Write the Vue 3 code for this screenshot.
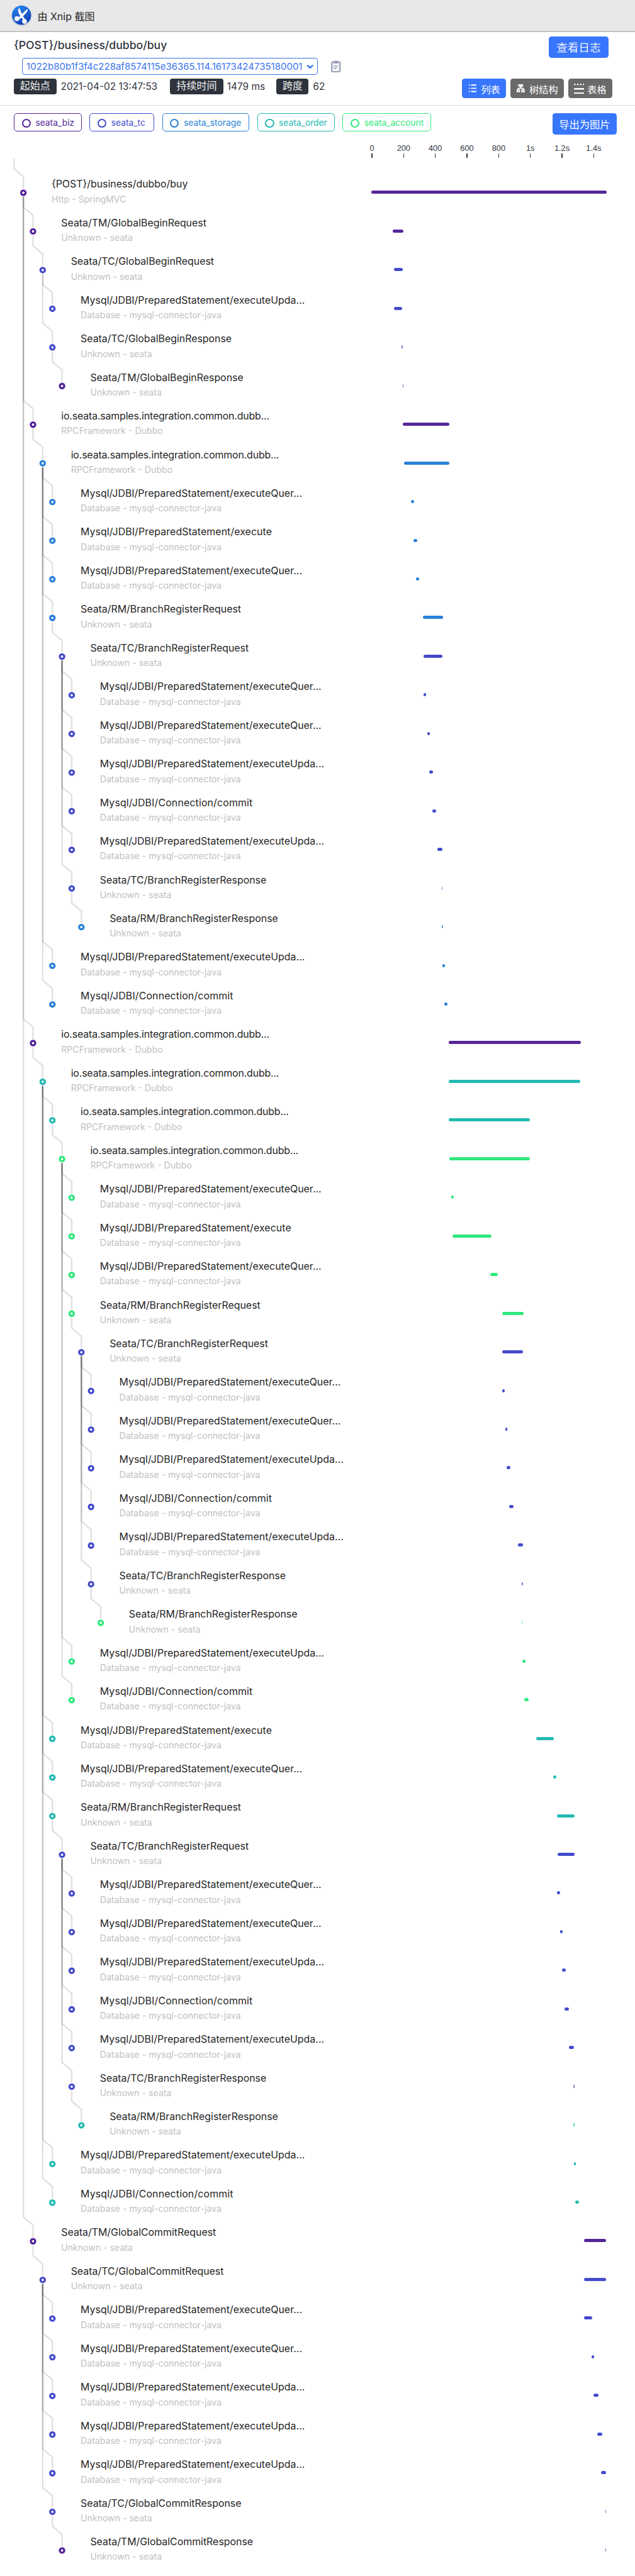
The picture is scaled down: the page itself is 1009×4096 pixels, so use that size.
<script setup>
const K = 1009 / 1576
const px = (n) => `${(n * K).toFixed(2)}px`

const palette = {
  biz: '#54259a',
  tc: '#444acb',
  storage: '#2881d8',
  order: '#22bab2',
  account: '#2fe97c',
}

const services = [
  { key: 'biz', name: 'seata_biz', width: 168 },
  { key: 'tc', name: 'seata_tc', width: 160 },
  { key: 'storage', name: 'seata_storage', width: 216 },
  { key: 'order', name: 'seata_order', width: 192 },
  { key: 'account', name: 'seata_account', width: 220 },
]

const SQL = 'Mysql/JDBI/PreparedStatement/'
const titles = {
  post: '{POST}/business/dubbo/buy',
  quer: SQL + 'executeQuer...',
  upda: SQL + 'executeUpda...',
  exec: SQL + 'execute',
  commit: 'Mysql/JDBI/Connection/commit',
  io: 'io.seata.samples.integration.common.dubb...',
}
const layers = {
  post: 'Http - SpringMVC',
  io: 'RPCFramework - Dubbo',
  quer: 'Database - mysql-connector-java',
  upda: 'Database - mysql-connector-java',
  exec: 'Database - mysql-connector-java',
  commit: 'Database - mysql-connector-java',
}

// depth, service, endpoint, bar start, bar end
const spans = [
  [0, 'biz', 'post', 95, 1409],
  [1, 'biz', 'TM/GlobalBeginRequest', 214, 272],
  [2, 'tc', 'TC/GlobalBeginRequest', 221, 269],
  [3, 'tc', 'upda', 221, 266],
  [3, 'tc', 'TC/GlobalBeginResponse', 264, 269],
  [4, 'biz', 'TM/GlobalBeginResponse', 268, 272],
  [1, 'biz', 'io', 269, 529],
  [2, 'storage', 'io', 278, 529],
  [3, 'storage', 'quer', 314, 332],
  [3, 'storage', 'exec', 328, 349],
  [3, 'storage', 'quer', 345, 361],
  [3, 'storage', 'RM/BranchRegisterRequest', 381, 494],
  [4, 'tc', 'TC/BranchRegisterRequest', 387, 493],
  [5, 'tc', 'quer', 387, 401],
  [5, 'tc', 'quer', 407, 421],
  [5, 'tc', 'upda', 417, 439],
  [5, 'tc', 'commit', 435, 457],
  [5, 'tc', 'upda', 464, 493],
  [5, 'tc', 'TC/BranchRegisterResponse', 489, 493],
  [6, 'storage', 'RM/BranchRegisterResponse', 489, 495],
  [3, 'storage', 'upda', 490, 507],
  [3, 'storage', 'commit', 502, 521],
  [1, 'biz', 'io', 525, 1264],
  [2, 'order', 'io', 527, 1262],
  [3, 'order', 'io', 527, 982],
  [4, 'account', 'io', 529, 981],
  [5, 'account', 'quer', 541, 553],
  [5, 'account', 'exec', 548, 765],
  [5, 'account', 'quer', 760, 800],
  [5, 'account', 'RM/BranchRegisterRequest', 825, 944],
  [6, 'tc', 'TC/BranchRegisterRequest', 827, 943],
  [7, 'tc', 'quer', 826, 840],
  [7, 'tc', 'quer', 842, 855],
  [7, 'tc', 'upda', 849, 870],
  [7, 'tc', 'commit', 864, 888],
  [7, 'tc', 'upda', 912, 942],
  [7, 'tc', 'TC/BranchRegisterResponse', 936, 943],
  [8, 'account', 'RM/BranchRegisterResponse', 938, 943],
  [5, 'account', 'upda', 940, 955],
  [5, 'account', 'commit', 950, 973],
  [3, 'order', 'exec', 1014, 1113],
  [3, 'order', 'quer', 1111, 1129],
  [3, 'order', 'RM/BranchRegisterRequest', 1131, 1230],
  [4, 'tc', 'TC/BranchRegisterRequest', 1134, 1230],
  [5, 'tc', 'quer', 1133, 1148],
  [5, 'tc', 'quer', 1149, 1165],
  [5, 'tc', 'upda', 1159, 1180],
  [5, 'tc', 'commit', 1173, 1199],
  [5, 'tc', 'upda', 1200, 1228],
  [5, 'tc', 'TC/BranchRegisterResponse', 1223, 1230],
  [6, 'order', 'RM/BranchRegisterResponse', 1225, 1231],
  [3, 'order', 'upda', 1226, 1239],
  [3, 'order', 'commit', 1234, 1255],
  [1, 'biz', 'TM/GlobalCommitRequest', 1282, 1408],
  [2, 'tc', 'TC/GlobalCommitRequest', 1284, 1407],
  [3, 'tc', 'quer', 1284, 1330],
  [3, 'tc', 'quer', 1325, 1338],
  [3, 'tc', 'upda', 1336, 1363],
  [3, 'tc', 'upda', 1357, 1385],
  [3, 'tc', 'upda', 1379, 1407],
  [3, 'tc', 'TC/GlobalCommitResponse', 1401, 1408],
  [4, 'biz', 'TM/GlobalCommitResponse', 1403, 1408],
].map(([depth, service, key, from, to], i) => ({
  depth,
  color: palette[service],
  title: titles[key] || `Seata/${key}`,
  layer: layers[key] || 'Unknown - seata',
  kind: titles[key] ? key : 'seata',
  start: from / 2.2529 - 43,
  length: (to - from) / 2.2529,
  tiny: to - from < 8,
  x: 58 + depth * 24,
  y: 48 + i * 96,
}))

const links = spans.slice(1).map((span, i) => {
  let p = i
  while (spans[p].depth !== span.depth - 1) p--
  const parent = spans[p]
  return `M${parent.x} ${parent.y + 10}V${span.y - 60}L${span.x} ${span.y - 40}V${span.y - 10}`
})

const ticks = ['0', '200', '400', '600', '800', '1s', '1.2s', '1.4s']
</script>

<template>
  <div class="page">
    <div class="xnip">
      <svg class="xnip-logo" viewBox="0 0 60 60">
        <defs>
          <linearGradient id="disc" x1="0" y1="0" x2="0.4" y2="1">
            <stop offset="0" stop-color="#2a8df2" />
            <stop offset="1" stop-color="#1240b8" />
          </linearGradient>
        </defs>
        <circle cx="30" cy="31.5" r="26" fill="#bfc3cc" opacity=".6" />
        <circle cx="30" cy="30" r="25.3" fill="#e6edf6" />
        <circle cx="30" cy="30" r="24" fill="url(#disc)" />
        <g fill="#f4f6fa">
          <path d="M24.5 11.5C20.5 15 21.5 20.5 23 24.5L26.5 31.5L20 38L23 41.5L30 36.5L35 43L38.5 40L34 32.5C39 27 46 21 45.5 15.5C44.8 14.5 43 15.5 41.5 16.8L31 27Z" />
          <circle cx="18.5" cy="38.5" r="6" />
          <circle cx="37.5" cy="45.5" r="6" />
        </g>
      </svg>
      <span>由 Xnip 截图</span>
    </div>

    <header class="detail">
      <div class="detail-top">
        <div>
          <h1>{POST}/business/dubbo/buy</h1>
          <div class="trace-line">
            <div class="trace-select">
              <span>1022b80b1f3f4c228af8574115e36365.114.16173424735180001</span>
              <svg viewBox="0 0 18 12"><path d="M2 2.5L9 9L16 2.5" fill="none" stroke="#3b74e6" stroke-width="4" /></svg>
            </div>
            <svg class="clip" viewBox="0 0 24 30">
              <rect x="1.8" y="3.8" width="20.4" height="24.4" rx="3.5" fill="none" stroke="#98a0b2" stroke-width="3.6" />
              <path d="M6 2.5H9.5Q10 0 12 0T14.5 2.5H18V8H6Z" fill="#98a0b2" />
              <path d="M6.5 13H17.5M6.5 17H17.5M6.5 21H14" stroke="#98a0b2" stroke-width="2" />
            </svg>
          </div>
        </div>
        <button class="btn log">查看日志</button>
      </div>
      <div class="detail-bottom">
        <div class="facts">
          <b>起始点</b><span class="date">2021-04-02 13:47:53</span>
          <b class="w4">持续时间</b><span class="dur">1479 ms</span>
          <b class="w2">跨度</b><span class="count">62</span>
        </div>
        <div class="modes">
          <button class="btn mode active">
            <svg class="i-s" viewBox="0 0 20 20" fill="none" stroke="#fff" stroke-width="3">
              <path d="M0 2H2.6M0 10H2.6M0 18H2.6" />
              <path d="M6.5 2H18.5M6.5 10H18.5M6.5 18H18.5" stroke-linecap="round" />
            </svg>列表
          </button>
          <button class="btn mode tree">
            <svg class="i-s" viewBox="0 0 20 20">
              <path d="M4 0H16V6H11.5V8.5H15Q18 8.5 18 12H20V20H11.5V12H14.5V11H5.5V12H8.5V20H0V12H2Q2 8.5 5 8.5H8.5V6H4Z" fill="#fff" />
              <rect x="3.2" y="14.5" width="2.3" height="2.5" fill="#6a6a6a" />
              <rect x="14.5" y="14.5" width="2.3" height="2.5" fill="#6a6a6a" />
            </svg>树结构
          </button>
          <button class="btn mode table">
            <svg class="i-l" viewBox="0 0 26 26" fill="#fff">
              <circle cx="2" cy="2" r="2" /><circle cx="9.3" cy="2" r="2" /><circle cx="16.7" cy="2" r="2" /><circle cx="24" cy="2" r="2" />
              <rect y="11" width="26" height="4" rx="2" /><rect y="22" width="26" height="4" rx="2" />
            </svg>表格
          </button>
        </div>
      </div>
    </header>

    <section class="legend">
      <div class="tags">
        <div v-for="s in services" :key="s.key" class="tag" :style="{ color: palette[s.key], width: px(s.width) }">
          <i></i><span>{{ s.name }}</span>
        </div>
      </div>
      <button class="btn export">导出为图片</button>
    </section>

    <div class="axis">
      <div v-for="t in ticks" :key="t" class="tick"><span>{{ t }}</span><i></i></div>
    </div>

    <main class="trace">
      <svg class="links" viewBox="0 0 320 5992">
        <g fill="none" stroke="#000" stroke-opacity=".125" stroke-width="3.6">
          <path d="M34.8 3V29L58 48V78" />
          <path v-for="(d, i) in links" :key="i" :d="d" transform="translate(0 40)" />
        </g>
        <circle
          v-for="(s, i) in spans" :key="i" :cx="s.x" :cy="s.y + 40" r="5.5"
          fill="#fff" :stroke="s.color" stroke-width="5.2"
        />
      </svg>
      <div v-for="(s, i) in spans" :key="i" class="row">
        <div class="label" :style="{ paddingLeft: px(s.x + 70) }">
          <div class="title" :class="s.kind">{{ s.title }}</div>
          <div class="layer">{{ s.layer }}</div>
        </div>
        <div class="track">
          <div
            class="bar" :class="{ tiny: s.tiny }"
            :style="{ marginLeft: px(s.start), width: px(s.length), background: s.color }"
          ></div>
        </div>
      </div>
    </main>
  </div>
</template>

<style>
body {
  margin: 0;
  background: #fff;
}
</style>

<style scoped>
.page {
  width: 1009px;
  height: 4096px;
  overflow: hidden;
  background: #fff;
  font-family: Inter, "Noto Sans CJK SC", sans-serif;
  color: #30353e;
}
.page * {
  box-sizing: border-box;
}
.xnip {
  display: flex;
  align-items: center;
  height: 51.2px;
  padding-left: 15px;
  background: #e8e8e8;
  border-bottom: 2.6px solid #c5c5c5;
  color: #262626;
  font-size: 16px;
  white-space: nowrap;
}
.xnip-logo {
  width: 38.4px;
  height: 38.4px;
  margin-right: 6px;
}
.detail {
  height: 116.5px;
  padding: 6.4px 35.9px 0 22px;
  border-bottom: 1.3px solid #dedede;
}
.detail-top,
.detail-bottom {
  display: flex;
  justify-content: space-between;
}
.detail-top {
  height: 67.9px;
}
h1 {
  margin: 0;
  height: 34.6px;
  font-size: 17.6px;
  line-height: 28px;
  font-weight: 500;
  white-space: nowrap;
}
.trace-line {
  display: flex;
  align-items: center;
  margin-left: 12.6px;
}
.trace-select {
  display: flex;
  align-items: center;
  justify-content: space-between;
  width: 470px;
  height: 26.9px;
  padding: 0 5px 0 6.5px;
  border: 1.3px solid #3d74e3;
  border-radius: 4px;
  color: #3b76f0;
  font-size: 15px;
  white-space: nowrap;
}
.trace-select svg {
  flex: none;
  width: 11.5px;
  height: 7.7px;
}
.clip {
  width: 15.4px;
  height: 19.2px;
  margin-left: 21.7px;
}
.btn {
  display: flex;
  align-items: center;
  justify-content: center;
  padding: 0;
  border: 0;
  border-radius: 4.5px;
  background: #3876fe;
  color: #fff;
  font-family: inherit;
  white-space: nowrap;
}
.log {
  width: 94.8px;
  height: 34.6px;
  margin-right: 6.4px;
  color: #ecf1ff;
  font-size: 17.6px;
}
.facts {
  display: flex;
  height: 24.3px;
  align-items: center;
  font-size: 15.4px;
  white-space: nowrap;
}
.facts b {
  width: 67.5px;
  height: 24.3px;
  border-radius: 4px;
  background: #2e333c;
  color: #f4f4f5;
  font-weight: 400;
  font-size: 16px;
  line-height: 23px;
  text-align: center;
}
.facts .w4 {
  width: 84.5px;
}
.facts .w2 {
  width: 51.2px;
}
.facts span {
  padding-left: 7px;
}
.facts .date {
  width: 180.8px;
}
.facts .dur {
  width: 84.5px;
  padding-left: 6px;
}
.modes {
  display: flex;
  gap: 6.4px;
}
.mode {
  width: 70.4px;
  height: 30.7px;
  justify-content: flex-start;
  padding-left: 10.9px;
  font-size: 15.1px;
}
.mode.tree {
  width: 85.8px;
  background: #6a6a6a;
}
.mode.table {
  padding-left: 9px;
  background: #6a6a6a;
}
.i-s {
  width: 12.8px;
  height: 12.8px;
  margin-right: 7px;
}
.i-l {
  width: 16.6px;
  height: 16.6px;
  margin-right: 5px;
}
.legend {
  display: flex;
  justify-content: space-between;
  height: 58.3px;
  padding: 12.8px 29.5px 0 22px;
}
.tags {
  display: flex;
  gap: 12.8px;
}
.tag {
  display: flex;
  align-items: center;
  height: 28.2px;
  padding-left: 11.5px;
  border: 1.3px solid;
  border-radius: 5px;
  font-size: 13.8px;
  white-space: nowrap;
}
.tag i {
  width: 14.4px;
  height: 14.4px;
  margin: 3px 7.5px 0 0;
  border: 2.7px solid;
  border-radius: 50%;
}
.export {
  width: 101.2px;
  height: 33.3px;
  font-size: 16.3px;
}
.axis {
  display: flex;
  height: 49.3px;
  padding: 2px 0 0 565.8px;
  font-family: "Liberation Sans", Arial, sans-serif;
  font-size: 12.8px;
  line-height: 15px;
}
.tick {
  display: flex;
  flex: 0 0 50.35px;
  flex-direction: column;
  align-items: center;
}
.tick i {
  width: 1.3px;
  height: 7px;
  margin-top: 1.4px;
  background: #30353e;
}
.trace {
  position: relative;
}
.links {
  position: absolute;
  left: 0;
  top: -25.6px;
  width: 204.87px;
  height: 3836.26px;
  overflow: visible;
}
.row {
  display: flex;
  height: 61.4625px;
}
.label {
  flex: 0 0 590.9px;
  padding-top: 8.1px;
  white-space: nowrap;
}
.title {
  height: 23.4px;
  font-size: 15.9px;
  line-height: 20px;
  color: #262626;
}
.title.io {
  letter-spacing: -0.16px;
}
.title.commit {
  letter-spacing: 0.15px;
}
.title.exec {
  letter-spacing: 0.08px;
}
.title.quer,
.title.upda {
  letter-spacing: 0.03px;
}
.layer {
  font-size: 14.1px;
  line-height: 20px;
  color: #bfbfbf;
}
.track {
  flex: 1;
  padding-top: 28.2px;
}
.bar {
  height: 5px;
  border-radius: 2.5px;
}
.bar.tiny {
  opacity: .75;
  border-radius: 1px;
}
</style>
